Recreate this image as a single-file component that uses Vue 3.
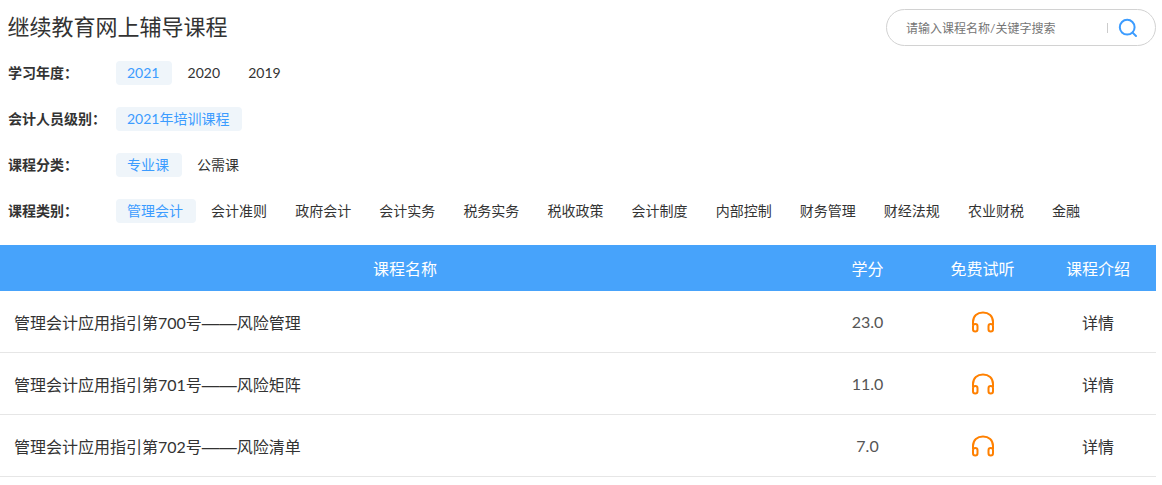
<script setup>
const filters = [
  { label: '学习年度：', items: ['2021', '2020', '2019'] },
  { label: '会计人员级别：', items: ['2021年培训课程'] },
  { label: '课程分类：', items: ['专业课', '公需课'] },
  { label: '课程类别：', items: ['管理会计', '会计准则', '政府会计', '会计实务', '税务实务', '税收政策', '会计制度', '内部控制', '财务管理', '财经法规', '农业财税', '金融'] }
]
const rows = [
  { before: '管理会计应用指引第700号', after: '风险管理', credit: '23.0' },
  { before: '管理会计应用指引第701号', after: '风险矩阵', credit: '11.0' },
  { before: '管理会计应用指引第702号', after: '风险清单', credit: '7.0' }
]
</script>

<template>
  <div class="page">
    <header class="top">
      <h1 class="title">继续教育网上辅导课程</h1>
      <div class="search">
        <span class="placeholder">请输入课程名称/关键字搜索</span>
        <span class="divider"></span>
        <svg class="search-icon" width="20" height="20" viewBox="0 0 20 20" fill="none">
          <circle cx="9.2" cy="9.2" r="7.4" stroke="#3c9cff" stroke-width="2" />
          <path d="M14.6 14.6 L18 18" stroke="#3c9cff" stroke-width="2" stroke-linecap="round" />
        </svg>
      </div>
    </header>

    <section class="filters">
      <div v-for="f in filters" :key="f.label" class="filter">
        <span class="label">{{ f.label }}</span>
        <div class="items">
          <span v-for="(item, i) in f.items" :key="item" class="pill" :class="{ active: i === 0 }">{{ item }}</span>
        </div>
      </div>
    </section>

    <div class="table">
      <div class="row head">
        <div class="name">课程名称</div>
        <div class="cell">学分</div>
        <div class="cell">免费试听</div>
        <div class="cell">课程介绍</div>
      </div>
      <div v-for="r in rows" :key="r.before" class="row body">
        <div class="name">{{ r.before }}<span class="dash">——</span>{{ r.after }}</div>
        <div class="cell credit">{{ r.credit }}</div>
        <div class="cell">
          <svg width="24" height="22" viewBox="0 0 24 22" fill="none" stroke="#ff8000" stroke-width="2">
            <path d="M2 14 V11 C2 5 6.200 1.500 12 1.500 C17.800 1.500 22 5 22 11 V14" />
            <rect x="2" y="13" width="4.500" height="7.500" rx="2.200" />
            <rect x="17.500" y="13" width="4.500" height="7.500" rx="2.200" />
          </svg>
        </div>
        <div class="cell">详情</div>
      </div>
    </div>
  </div>
</template>

<style scoped>
.page {
  width: 1156px;
  font-family: "Lato", "Noto Sans CJK SC", sans-serif;
  color: #333;
  font-size: 14px;
}
.top {
  height: 61px;
  display: flex;
  justify-content: space-between;
  align-items: flex-start;
}
.title {
  margin: 12px 0 0 7.500px;
  font-size: 22px;
  font-weight: 400;
  line-height: 30px;
  color: #333;
}
.search {
  margin-top: 9px;
  width: 270px;
  height: 37px;
  box-sizing: border-box;
  border: 1px solid #d2d2d2;
  border-radius: 19px;
  display: flex;
  align-items: center;
  padding-left: 19px;
}
.placeholder {
  font-size: 12px;
  color: #757575;
  width: 201px;
}
.divider {
  width: 1px;
  height: 10px;
  background: #ccc;
}
.search-icon {
  margin-left: 10px;
}
.filters {
  display: flex;
  flex-direction: column;
  gap: 22px;
  padding-left: 8px;
}
.filter {
  display: flex;
  align-items: center;
  height: 24px;
}
.label {
  width: 108px;
  font-size: 14px;
  font-weight: 700;
  line-height: 24px;
  color: #333;
}
.items {
  display: flex;
  gap: 4.100px;
}
.pill {
  height: 24px;
  line-height: 24px;
  padding: 0 13px 0 11px;
  font-size: 14px;
  border-radius: 4px;
  color: #333;
  white-space: nowrap;
}
.pill.active {
  background: #eff5fa;
  color: #3c9cff;
}
.table {
  margin-top: 22px;
}
.row {
  display: grid;
  grid-template-columns: 810px 115px 115px 116px;
  align-items: center;
  text-align: center;
}
.head {
  height: 46px;
  background: #47a3fb;
  color: #fff;
  font-size: 16px;
}
.body {
  height: 62px;
  box-sizing: border-box;
  border-bottom: 1px solid #e6e6e6;
  font-size: 16px;
}
.body .name {
  text-align: left;
  padding-left: 14px;
}
.dash {
  font-family: "Liberation Sans", sans-serif;
  font-size: 17.500px;
}
.cell {
  display: flex;
  justify-content: center;
  align-items: center;
}
.credit {
  color: #555;
}
</style>
